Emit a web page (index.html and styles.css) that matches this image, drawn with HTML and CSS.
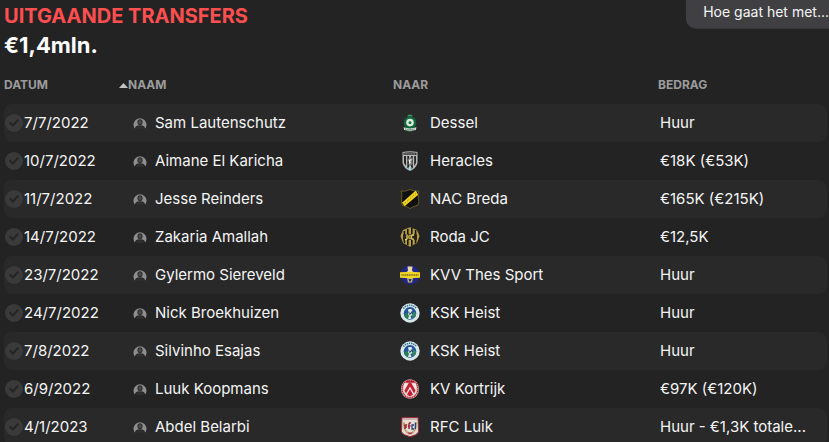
FILE: index.html
```
<!DOCTYPE html>
<html lang="nl">
<head>
<meta charset="utf-8">
<meta name="viewport" content="width=device-width, initial-scale=1">
<title>Uitgaande transfers</title>
<link rel="stylesheet" href="styles.css">
</head>
<body>
<svg class="sprite" aria-hidden="true">
  <symbol id="person" viewBox="0 0 14 14">
    <path fill="#8e8e8e" d="M1.800 12.600A6.500 6.500 0 1 1 12.200 12.600Q11.800 10.300 9.800 9.500H4.200Q2.200 10.300 1.800 12.600Z"/>
    <ellipse cx="7" cy="6.200" rx="2.600" ry="3" fill="#2e2e2f"/>
    <path fill="#2e2e2f" d="M3.200 13C3.500 10.600 5 9.400 7 9.400s3.500 1.200 3.800 3.600Z"/>
    <ellipse cx="7" cy="6.200" rx="1.500" ry="1.900" fill="#4b4b4b"/>
  </symbol>
  <symbol id="dessel" viewBox="0 0 20 20">
    <path d="M7 2.500Q10 .3 13 2.500L12 4H8Z" fill="#17683b"/>
    <path d="M8 2.400h4" stroke="#75a988" stroke-width=".7"/>
    <circle cx="10" cy="9.700" r="6.300" fill="#11683a"/>
    <circle cx="10" cy="9.600" r="3.800" fill="#dce9df"/>
    <path d="M10 8l1.600 1.200-.6 1.800H9L8.400 9.200Z" fill="#15713f"/>
    <path d="M3.500 14.300Q10 16.500 16.500 14.300L15.800 17Q10 18.600 4.200 17Z" fill="#d5dfd7"/>
    <path d="M5 15.900Q10 17.200 15 15.900" fill="none" stroke="#2b573b" stroke-width=".8" stroke-dasharray="1 .7"/>
    <path d="M7 18Q10 19.800 13 18Z" fill="#17683b"/>
  </symbol>
  <symbol id="heracles" viewBox="0 0 20 20">
    <path d="M2.500 1Q10-.3 17.500 1V12Q16.500 17 10 20 3.500 17 2.500 12Z" fill="#b9b9b9"/>
    <path d="M3.500 1.800Q10 .8 16.500 1.800V4H3.500Z" fill="#333"/>
    <path d="M4.500 3h11" stroke="#bbb" stroke-width=".9" stroke-dasharray="1 .6"/>
    <path d="M4 5h2v10l-2-3ZM7.300 5h1.800v12.800l-1.800-1ZM11 5h1.800v12L11 18ZM14.200 5H16v7l-1.800 3Z" fill="#262626"/>
    <path d="M8 8l3-2 2 2-1 2 1 3-3 2-2-2 2-2-3-1Z" fill="#777"/>
    <path d="M9 9l2-1 1 1-2 1 1 2-2 1Z" fill="#eee"/>
    <circle cx="10" cy="17" r="1.600" fill="#9adcef"/>
  </symbol>
  <symbol id="nac" viewBox="0 0 20 20">
    <path d="M1 2Q5 3 10 .5 15 3 19 2Q17.500 5 18.500 9T18 16Q14 17 10 19.500 6 17 2 16 1 13 1.700 9T1 2Z" fill="#101010" stroke="#77671f" stroke-width=".8"/>
    <path d="M2 13.800L15.800 1.600 18.200 5.800 4.600 17.200Z" fill="#f0d322"/>
    <path d="M4.500 14.300L16 4.400" stroke="#9f8b1b" stroke-width="1" stroke-dasharray="2 1.500"/>
  </symbol>
  <symbol id="roda" viewBox="0 0 20 20">
    <path d="M10 .3L17 3 19.500 9 17 16 10 19.700 3 16 .5 9 3 3Z" fill="#b69e45"/>
    <path d="M3.600 4h1.600v12.500l-1.600-1ZM7 2h1.600v16.500L7 17.800ZM11 1h1.600v17.500L11 19ZM14.800 3h1.600v13l-1.600 1Z" fill="#17150f"/>
    <path d="M3 7.300h14v5.500H3Z" fill="#29251a"/>
    <path d="M7 7.500v4q0 1.300-2 1M14 8h-2q-1.500 2 0 4.200h2" fill="none" stroke="#e8d37a" stroke-width="1.300"/>
    <circle cx="10" cy="10" r="2" fill="#d9bd43"/>
    <circle cx="10" cy="10" r=".8" fill="#222"/>
  </symbol>
  <symbol id="thes" viewBox="0 0 20 20">
    <circle cx="10" cy="10" r="9.500" fill="#20268a"/>
    <path d="M7.500 1.500h5l-.5 4 1.500 2h-7l1.500-2Z" fill="#e7dca0"/>
    <path d="M7 13h6l-1 4.500H8Z" fill="#c9bb69"/>
    <path d="M8.500 14h3l-.7 2.500H9.200Z" fill="#292d78"/>
    <path d="M0 7.200Q10 6.400 20 7.200V12.800Q10 13.600 0 12.800Z" fill="#f0d424"/>
    <path d="M1.500 10h17" stroke="#716520" stroke-width="1.700" stroke-dasharray="1.200 .6"/>
  </symbol>
  <symbol id="heist" viewBox="0 0 20 20">
    <circle cx="10" cy="10" r="9.700" fill="#d8e8eb"/>
    <path d="M3.200 5.500Q10-1 16.800 5.500" fill="none" stroke="#3b7893" stroke-width="1.600" stroke-dasharray="1.400 .8"/>
    <circle cx="10" cy="10.400" r="6.300" fill="#24539a"/>
    <path d="M4 12Q6 9 9 11l1 5.500Q5.500 16 4 12Z" fill="#258052"/>
    <path d="M13 9Q17 9 15.800 13L12 16Z" fill="#34885b"/>
    <path d="M8.500 6h3l1 2-2 1 2 3-2 1 1 3H8l1-3-1-2 1-2-1-1Z" fill="#dce9ed"/>
    <path d="M9.300 9.600l2 .7-1.800 2.200Z" fill="#173849"/>
  </symbol>
  <symbol id="kortrijk" viewBox="0 0 20 20">
    <ellipse cx="10" cy="10" rx="9" ry="9.800" fill="#dfcccc"/>
    <ellipse cx="10" cy="10" rx="7.900" ry="8.700" fill="none" stroke="#bd2736" stroke-width="1.400" stroke-dasharray="1.400 .5"/>
    <path d="M4 4.500h12v7Q15 15 10 17.500 5 15 4 11.500Z" fill="#f1e5e5"/>
    <path d="M4.500 11.500L8.700 4h2.600l4.200 7.500-1.500 3L10 7.500 6 14.500ZM7 15.500l3-5.200 3 5.200-3 2Z" fill="#c41e30"/>
    <path d="M6 2.800h8" stroke="#b11b2b" stroke-width="1.800"/>
  </symbol>
  <symbol id="luik" viewBox="0 0 20 20">
    <path d="M2 .7H18L18.500 15Q17 18 10 19.700 3 18 1.500 15Z" fill="#e6ded4" stroke="#a82b3b"/>
    <path d="M3 2h14" stroke="#bdaaaa" stroke-width="1.400"/>
    <path d="M4 5.500Q3.500 14 9.500 16.800M16 5.500Q16.500 14 10.500 16.800" fill="none" stroke="#b69b65" stroke-width="2" stroke-dasharray="1.500 .4"/>
    <path d="M5 12V8h2.200M5 10h2M9 12V7q0-1.500 2-1M8 9h2.500" fill="none" stroke="#9d2533" stroke-width="1.500"/>
    <path d="M14 8h-2v4h2M15.400 5.500V12" fill="none" stroke="#293d7d" stroke-width="1.300"/>
    <path d="M7 15.500h6l-3 2.300Z" fill="#b6364b"/>
  </symbol>
</svg>

<button class="prompt" type="button">Hoe gaat het met...</button>

<main class="panel">
  <header>
    <h1 class="title">UITGAANDE TRANSFERS</h1>
    <p class="total">€1,4mln.</p>
  </header>
  <table class="transfers">
    <colgroup>
      <col class="col-date"><col><col><col class="col-fee">
    </colgroup>
    <thead>
      <tr>
        <th scope="col" aria-sort="ascending"><button class="sort" type="button">DATUM<svg class="arrow" viewBox="0 0 9 5" aria-hidden="true"><path d="M0 5L4.500 0 9 5Z" fill="#c4c4c4"/></svg></button></th>
        <th scope="col">NAAM</th>
        <th scope="col">NAAR</th>
        <th scope="col">BEDRAG</th>
      </tr>
    </thead>
    <tbody>
      <tr>
        <td><label class="date"><input class="tick" type="checkbox">7/7/2022</label></td>
        <td><a class="player" href="#"><svg class="avatar"><use href="#person"/></svg>Sam Lautenschutz</a></td>
        <td><a class="club" href="#"><svg class="crest"><use href="#dessel"/></svg>Dessel</a></td>
        <td class="fee">Huur</td>
      </tr>
      <tr>
        <td><label class="date"><input class="tick" type="checkbox">10/7/2022</label></td>
        <td><a class="player" href="#"><svg class="avatar"><use href="#person"/></svg>Aimane El Karicha</a></td>
        <td><a class="club" href="#"><svg class="crest"><use href="#heracles"/></svg>Heracles</a></td>
        <td class="fee">€18K (€53K)</td>
      </tr>
      <tr>
        <td><label class="date"><input class="tick" type="checkbox">11/7/2022</label></td>
        <td><a class="player" href="#"><svg class="avatar"><use href="#person"/></svg>Jesse Reinders</a></td>
        <td><a class="club" href="#"><svg class="crest"><use href="#nac"/></svg>NAC Breda</a></td>
        <td class="fee">€165K (€215K)</td>
      </tr>
      <tr>
        <td><label class="date"><input class="tick" type="checkbox">14/7/2022</label></td>
        <td><a class="player" href="#"><svg class="avatar"><use href="#person"/></svg>Zakaria Amallah</a></td>
        <td><a class="club" href="#"><svg class="crest"><use href="#roda"/></svg>Roda JC</a></td>
        <td class="fee">€12,5K</td>
      </tr>
      <tr>
        <td><label class="date"><input class="tick" type="checkbox">23/7/2022</label></td>
        <td><a class="player" href="#"><svg class="avatar"><use href="#person"/></svg>Gylermo Siereveld</a></td>
        <td><a class="club" href="#"><svg class="crest"><use href="#thes"/></svg>KVV Thes Sport</a></td>
        <td class="fee">Huur</td>
      </tr>
      <tr>
        <td><label class="date"><input class="tick" type="checkbox">24/7/2022</label></td>
        <td><a class="player" href="#"><svg class="avatar"><use href="#person"/></svg>Nick Broekhuizen</a></td>
        <td><a class="club" href="#"><svg class="crest"><use href="#heist"/></svg>KSK Heist</a></td>
        <td class="fee">Huur</td>
      </tr>
      <tr>
        <td><label class="date"><input class="tick" type="checkbox">7/8/2022</label></td>
        <td><a class="player" href="#"><svg class="avatar"><use href="#person"/></svg>Silvinho Esajas</a></td>
        <td><a class="club" href="#"><svg class="crest"><use href="#heist"/></svg>KSK Heist</a></td>
        <td class="fee">Huur</td>
      </tr>
      <tr>
        <td><label class="date"><input class="tick" type="checkbox">6/9/2022</label></td>
        <td><a class="player" href="#"><svg class="avatar"><use href="#person"/></svg>Luuk Koopmans</a></td>
        <td><a class="club" href="#"><svg class="crest"><use href="#kortrijk"/></svg>KV Kortrijk</a></td>
        <td class="fee">€97K (€120K)</td>
      </tr>
      <tr>
        <td><label class="date"><input class="tick" type="checkbox">4/1/2023</label></td>
        <td><a class="player" href="#"><svg class="avatar"><use href="#person"/></svg>Abdel Belarbi</a></td>
        <td><a class="club" href="#"><svg class="crest"><use href="#luik"/></svg>RFC Luik</a></td>
        <td class="fee">Huur - €1,3K totale...</td>
      </tr>
    </tbody>
  </table>
</main>
</body>
</html>
```
FILE: styles.css
```
* {
  box-sizing: border-box;
}

body {
  margin: 0;
  overflow: hidden;
  background: #232324;
  color: #f5f5f5;
  font: 15px/20px Inter, "Liberation Sans", sans-serif;
}

button {
  margin: 0;
  border: 0;
  font: inherit;
  cursor: pointer;
}

.sprite {
  display: none;
}

.panel {
  padding: 4px 2px 0 4px;
}

.title,
.total {
  margin: 0;
  font-weight: 700;
}

.title {
  color: #ff4f4f;
  font-size: 20px;
  line-height: 24px;
}

.total {
  color: #fff;
  font-size: 22px;
  line-height: 34px;
}

/* Shortcut that hangs over the top edge of the panel */
.prompt {
  position: absolute;
  top: 0;
  right: 0;
  height: 29px;
  padding: 0 0 4px 17px;
  border-bottom: 1px solid #363637;
  border-radius: 0 0 0 10px;
  background: #404042;
  color: #f5f5f5;
  font-size: 14px;
  white-space: nowrap;
}

.transfers {
  width: 100%;
  border-collapse: separate;
  border-spacing: 0;
  table-layout: fixed;
}

.col-date {
  width: 124px;
}

.col-fee {
  width: 169px;
}

th {
  height: 42px;
  padding: 4px 0 0;
  color: #9b9b9b;
  font-size: 12px;
  font-weight: 700;
  line-height: 16px;
  text-align: left;
}

.sort {
  display: flex;
  width: 100%;
  align-items: center;
  justify-content: space-between;
  padding: 0;
  background: none;
  color: inherit;
}

.arrow {
  width: 9px;
  height: 5px;
}

td {
  height: 38px;
  padding: 0;
  white-space: nowrap;
}

tbody tr:nth-child(odd) td {
  background: #29292a;
}

td:first-child {
  border-radius: 8px 0 0 8px;
}

td:last-child {
  border-radius: 0 8px 8px 0;
}

.date,
.player,
.club {
  display: flex;
  align-items: center;
  color: inherit;
  text-decoration: none;
}

.date {
  gap: 1px;
}

.tick {
  display: grid;
  width: 18px;
  height: 18px;
  margin: 0 0 0 1px;
  place-items: center;
  border-radius: 50%;
  appearance: none;
  background: #3a3a3b;
}

.tick::before {
  width: 10px;
  height: 8px;
  background: #242425;
  clip-path: polygon(0 50%, 14% 32%, 38% 62%, 86% 0, 100% 16%, 38% 100%);
  content: "";
}

.player {
  gap: 8px;
  padding-left: 5px;
}

.avatar {
  width: 14px;
  height: 14px;
}

.club {
  gap: 10px;
  padding-left: 7px;
}

.crest {
  width: 20px;
  height: 20px;
}

.fee {
  padding-left: 2px;
}
```
